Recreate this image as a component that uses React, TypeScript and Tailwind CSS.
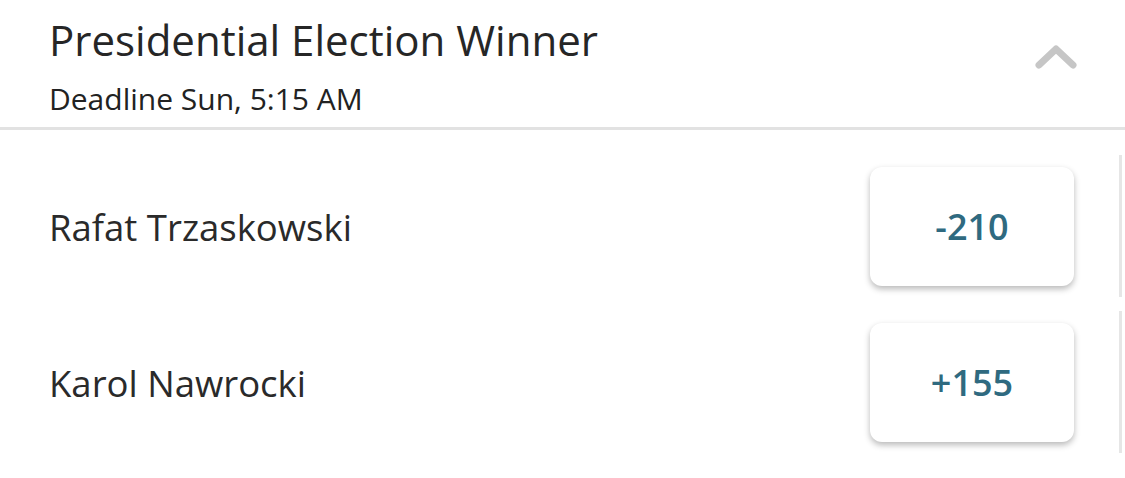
export default function App() {
  const rows = [
    { name: "Rafat Trzaskowski", odds: "-210" },
    { name: "Karol Nawrocki", odds: "+155" },
  ];
  return (
    <div className="w-[1125px] h-[478px] bg-white overflow-hidden text-[#222]" style={{ fontFamily: '"Open Sans", "Noto Sans", sans-serif' }}>
      <div className="flex items-start justify-between pl-[49px] pr-[48px] pt-[12px] h-[127px]">
        <div className="flex flex-col">
          <h1 className="text-[42px] leading-[56px] text-[#262626]">Presidential Election Winner</h1>
          <p className="text-[30px] leading-[36px] mt-[13px] text-[#222]">Deadline Sun, 5:15 AM</p>
        </div>
        <svg className="mt-[32px]" width="42" height="26" viewBox="0 0 42 26" fill="none">
          <path d="M4 21 L21 5 L38 21" stroke="#c6c6c6" strokeWidth="7" strokeLinecap="round" strokeLinejoin="round" />
        </svg>
      </div>
      <div className="h-[3px] bg-[#e2e2e2]" />
      <div className="flex flex-col">
        {rows.map((r) => (
          <div key={r.name} className="flex items-start h-[156px] pl-[49px] pt-[25px]">
            <div className="flex-1 flex items-center h-[142px]">
              <span className="flex-1 text-[36.5px] mt-[3px] text-[#2a2a2a]">{r.name}</span>
              <div className="w-[204px] h-[119px] mr-[45px] rounded-[12px] bg-white flex items-center justify-center shadow-[0_3px_6px_rgba(0,0,0,0.28)]">
                <span className="text-[36px] font-semibold mt-[2px] text-[#2f6a80]">{r.odds}</span>
              </div>
            </div>
            <div className="w-[3px] h-[142px] mr-[3px] bg-[#e6e6e6]" />
          </div>
        ))}
      </div>
    </div>
  );
}
